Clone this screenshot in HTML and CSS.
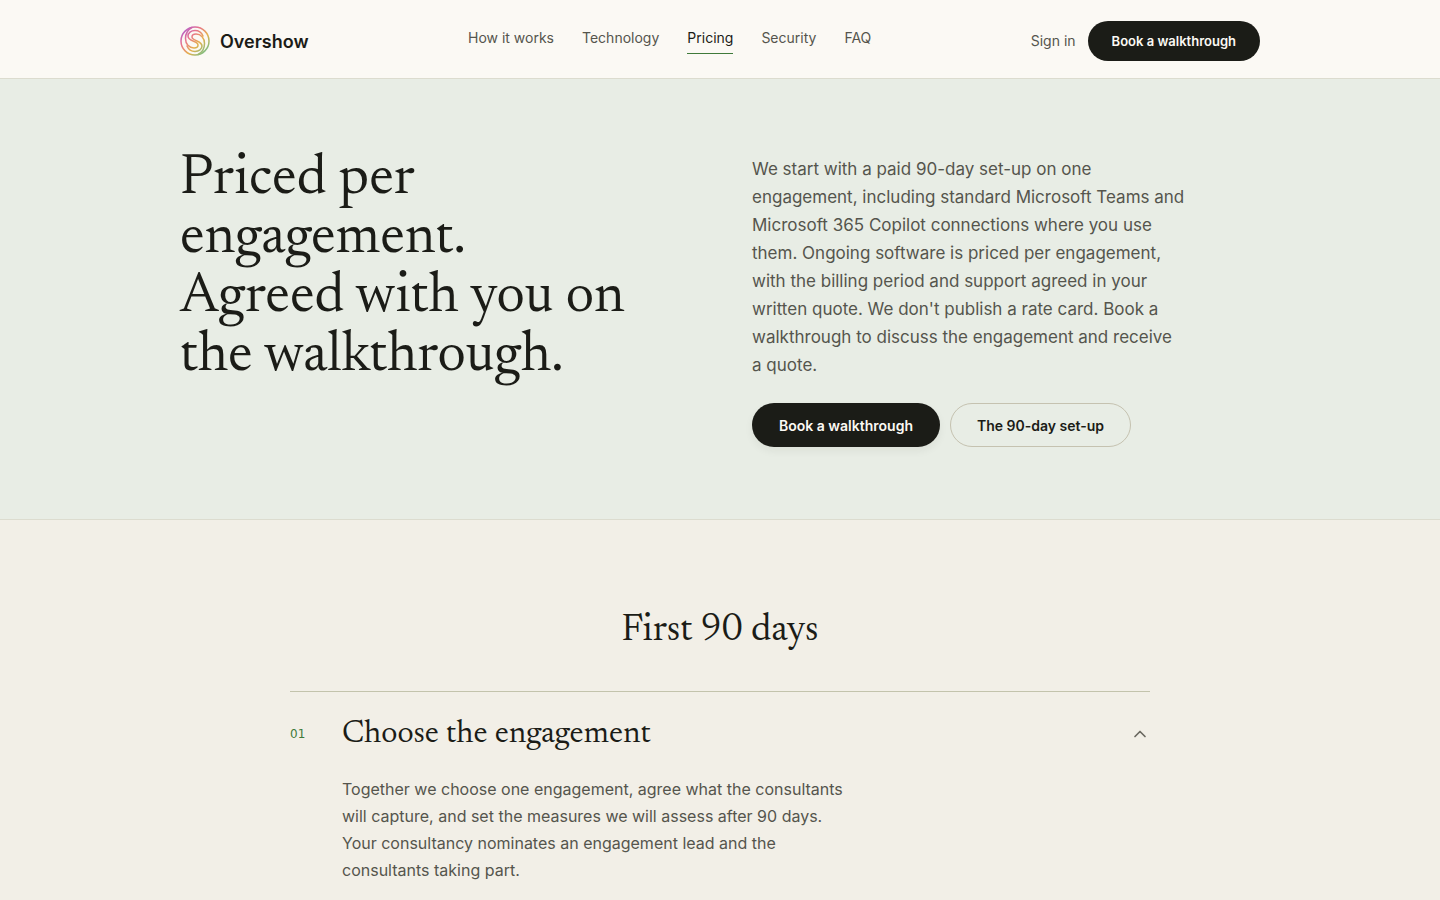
FILE: index.html
```html
<!DOCTYPE html>
<html lang="en">
<head>
<meta charset="utf-8">
<meta name="viewport" content="width=device-width, initial-scale=1">
<title>Pricing | Overshow</title>
<link rel="stylesheet" href="styles.css">
</head>
<body>
<header class="site-header">
<div class="container header-inner">
<a class="brand" href="#">
<svg class="brand-mark" viewBox="0 0 30 30" fill="none" stroke="url(#brand)" stroke-width="1.5" stroke-linecap="round" aria-hidden="true">
<defs>
<linearGradient id="brand" x1="3" y1="3" x2="27" y2="27" gradientUnits="userSpaceOnUse">
<stop offset="0" stop-color="#b05fd0"/>
<stop offset="0.3" stop-color="#e8738c"/>
<stop offset="0.62" stop-color="#e6b04c"/>
<stop offset="1" stop-color="#6dc08a"/>
</linearGradient>
</defs>
<circle cx="15" cy="15" r="14"/>
<path d="M23 10C21.500 6.500 18.500 4.500 15 4.500C11 4.500 8 7 8 10C8 15.500 18 15 18 19C18 21 16 22 14 22C9 22 5.500 18 5.500 12.500C5.500 8 8 3.500 12 1.500"/>
<path d="M7 20C8.500 23.500 11.500 25.500 15 25.500C19 25.500 22 23 22 20C22 14.500 12 15 12 11C12 9 14 8 16 8C21 8 24.500 12 24.500 17.500C24.500 22 22 26.500 18 28.500"/>
</svg>
<span>Overshow</span>
</a>
<nav class="main-nav">
<a href="#">How it works</a>
<a href="#">Technology</a>
<a class="active" href="#" aria-current="page">Pricing</a>
<a href="#">Security</a>
<a href="#">FAQ</a>
</nav>
<div class="header-actions">
<a class="sign-in" href="#">Sign in</a>
<button class="btn btn-dark btn-small" type="button">Book a walkthrough</button>
</div>
</div>
</header>
<main>
<section class="hero">
<div class="container hero-grid">
<h1>Priced per engagement.<br>Agreed with you on the walkthrough.</h1>
<div class="hero-copy">
<p>We start with a paid 90-day set-up on one engagement, including standard Microsoft Teams and Microsoft 365 Copilot connections where you use them. Ongoing software is priced per engagement, with the billing period and support agreed in your written quote. We don't publish a rate card. Book a walkthrough to discuss the engagement and receive a&nbsp;quote.</p>
<div class="hero-buttons">
<button class="btn btn-dark btn-shadow" type="button">Book a walkthrough</button>
<button class="btn btn-outline" type="button">The 90-day set-up</button>
</div>
</div>
</div>
</section>
<section class="days">
<h2>First 90 days</h2>
<details class="step" open>
<summary>
<span class="step-number">01</span>
<h3>Choose the engagement</h3>
<svg class="chevron" viewBox="0 0 20 20" fill="none" stroke="currentColor" stroke-width="1.7" stroke-linecap="round" stroke-linejoin="round" aria-hidden="true"><path d="M5 12.500l5-5 5 5"/></svg>
</summary>
<p>Together we choose one engagement, agree what the consultants will capture, and set the measures we will assess after 90 days. Your consultancy nominates an engagement lead and the consultants taking part.</p>
</details>
</section>
</main>
</body>
</html>
```
FILE: styles.css
```css
* {
  box-sizing: border-box;
}

body {
  margin: 0;
  background: #f2efe7;
  color: #1b1c17;
  font-family: Inter, "Liberation Sans", sans-serif;
  font-size: 16px;
}

a {
  color: inherit;
  text-decoration: none;
}

h1,
h2,
h3 {
  margin: 0;
  font-family: Newsreader, "Liberation Serif", serif;
  font-weight: 400;
}

p {
  margin: 0;
  color: #55554d;
}

.container {
  max-width: 1080px;
  margin: 0 auto;
}

/* Header */
.site-header {
  background: #fbf9f4;
  border-bottom: 1px solid #dcdccf;
}

.header-inner {
  display: flex;
  align-items: center;
  justify-content: space-between;
  padding: 21px 0 17px;
}

.brand {
  display: flex;
  align-items: center;
  gap: 10px;
  font-size: 18px;
  font-weight: 600;
}

.brand-mark {
  width: 30px;
  height: 30px;
}

.main-nav {
  display: flex;
  gap: 28px;
  color: #55554d;
  font-size: 14px;
}

.main-nav a {
  padding-bottom: 7px;
  border-bottom: 1px solid transparent;
}

.main-nav .active {
  color: #1b1c17;
  border-color: #3f7a3a;
}

.header-actions {
  display: flex;
  align-items: center;
  gap: 12px;
}

.sign-in {
  padding-bottom: 2px;
  color: #55554d;
  font-size: 14px;
}

/* Buttons */
.btn {
  height: 44px;
  padding: 0 26px;
  border: 1px solid transparent;
  border-radius: 22px;
  font-family: inherit;
  font-size: 14px;
  font-weight: 600;
  cursor: pointer;
}

.btn-dark {
  background: #1b1c17;
  color: #fbf9f4;
}

.btn-shadow {
  box-shadow: 0 4px 8px rgba(27, 28, 23, 0.06);
}

.btn-outline {
  background: transparent;
  color: #1b1c17;
  border-color: #c5c2b0;
}

.btn-small {
  height: 40px;
  padding: 0 23px;
  font-size: 13px;
}

/* Hero */
.hero {
  padding: 72px 0;
  background: #e8ede5;
  border-bottom: 1px solid #dcdccf;
}

.hero-grid {
  display: grid;
  grid-template-columns: 1fr 1fr;
  gap: 64px;
}

h1 {
  font-size: 56px;
  line-height: 59px;
}

.hero-copy {
  padding-top: 4px;
}

.hero-copy p {
  max-width: 440px;
  font-size: 17px;
  line-height: 28px;
}

.hero-buttons {
  display: flex;
  gap: 10px;
  margin-top: 24px;
}

/* First 90 days */
.days {
  max-width: 860px;
  margin: 0 auto;
  padding: 88px 0;
}

.days h2 {
  margin-bottom: 36px;
  font-size: 38px;
  line-height: 47px;
  text-align: center;
}

.step {
  border-top: 1px solid #c3c3ac;
}

.step summary {
  display: grid;
  grid-template-columns: 32px 1fr 20px;
  gap: 20px;
  align-items: center;
  padding: 22px 0 20px;
  list-style: none;
  cursor: pointer;
}

.step-number {
  color: #3f7a3a;
  font-family: "DejaVu Sans", sans-serif;
  font-size: 12px;
}

.step h3 {
  font-size: 32px;
  line-height: 40px;
}

.chevron {
  width: 20px;
  height: 20px;
  color: #6b6a61;
}

.step p {
  max-width: 562px;
  padding: 2px 0 28px 52px;
  line-height: 27px;
}
```
